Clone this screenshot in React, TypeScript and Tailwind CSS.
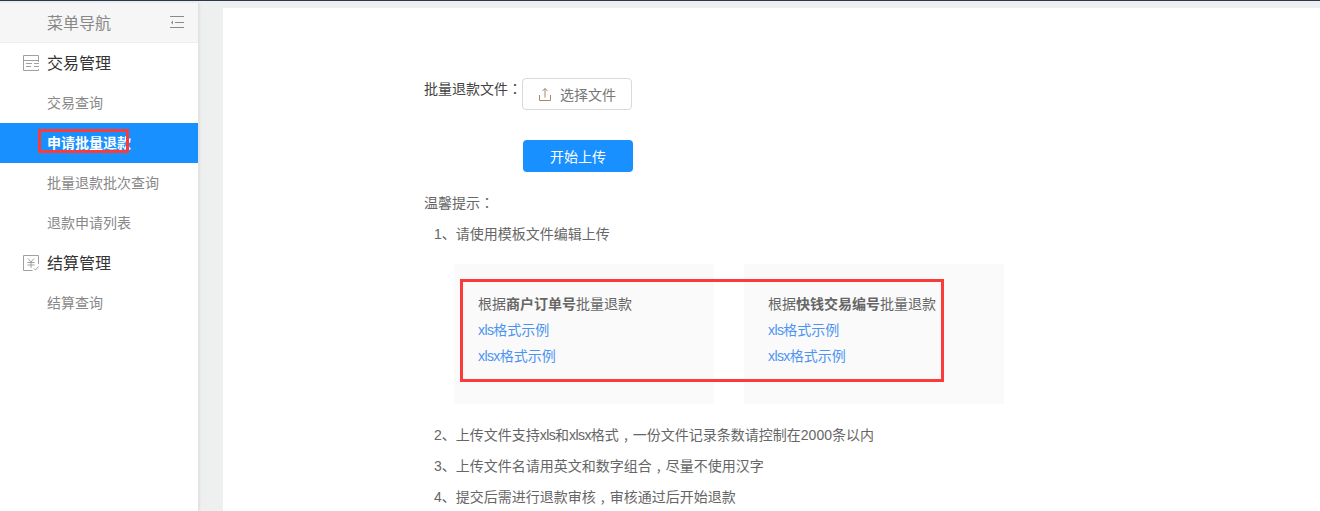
import { ReactNode } from 'react'

const FONT = 'font-["Noto_Sans_CJK_SC","Liberation_Sans",sans-serif]'

// latin letters run narrower in the original
function L({ children }: { children: ReactNode }) {
  return <span className='font-["Liberation_Sans",sans-serif] tracking-[-0.6px]'>{children}</span>
}

function N({ children }: { children: ReactNode }) {
  return <span className='font-["Liberation_Sans",sans-serif]'>{children}</span>
}

// full-width colon sits centred
function Colon() {
  return <span className='font-["Noto_Sans_CJK_TC",sans-serif]'>：</span>
}

// full-width comma sits low and in the middle of its cell
function Comma() {
  return <span className="inline-block w-3.5 text-center">,</span>
}

function TradeIcon() {
  return (
    <svg width="17" height="17" viewBox="0 0 17 17" fill="none" stroke="#a0a0a0" strokeWidth="1">
      <path d="M15.500 7V.5H.5v15h15v-1.500" />
      <path d="M.5 5.500h15M3 8.500h6M3 11.500h5M11 8.500h5M11 11.500h5" />
    </svg>
  )
}

function SettleIcon() {
  return (
    <svg width="17" height="17" viewBox="0 0 17 17" fill="none" stroke="#a0a0a0" strokeWidth="1">
      <path d="M15.500 9V.5H.5v15h9" />
      <path d="M5 3.500l3 3.500 3-3.500M4.500 7.500h7M4.500 10h7M8 7v6" />
      <path d="M11 13.500l1.500 1.500 3-3.500" />
    </svg>
  )
}

function SubItem({ children, active }: { children: ReactNode; active?: boolean }) {
  return (
    <div
      className={
        active
          ? 'h-10 pl-[47px] pb-0.5 flex items-center text-sm font-bold text-white bg-[#1890ff]'
          : 'h-10 pl-[47px] pb-0.5 flex items-center text-sm text-[#888888]'
      }
    >
      {children}
    </div>
  )
}

function GroupItem({ icon, children }: { icon: ReactNode; children: ReactNode }) {
  return (
    <div className="h-10 flex items-center text-base text-[#333333]">
      <span className="w-[47px] pl-[23px] flex items-center">{icon}</span>
      <span className="pb-0.5">{children}</span>
    </div>
  )
}

function SampleCard({ before, strong }: { before: string; strong: string }) {
  return (
    <div className="w-[260px] h-[140px] bg-[#fafafa] pl-6 pt-[27px]">
      <div className="h-[26px] leading-[24px] text-[#666666]">
        {before}
        <span className="font-bold">{strong}</span>
        批量退款
      </div>
      <div className="h-[26px] leading-[24px] text-[#4d94f0]">
        <L>xls</L>格式示例
      </div>
      <div className="h-[26px] leading-[24px] text-[#4d94f0]">
        <L>xlsx</L>格式示例
      </div>
    </div>
  )
}

export default function App() {
  return (
    <div className={`${FONT} relative w-[1320px] h-[511px] overflow-hidden bg-[#eef0f0] flex flex-col`}>
      <div className="h-[3px] shrink-0 border-t border-[#2d3650]" />

      <div className="flex flex-1 min-h-0">
        {/* Sidebar */}
        <aside className="w-[199px] shrink-0 bg-white border-r border-[#e2e2e2] shadow-[1px_0_2px_rgba(0,0,0,0.06)]">
          <div className="h-10 bg-[#f6f6f6] border-b border-[#eeeeee] flex items-center justify-between pl-[47px] pr-[14px] pb-0.5 text-base text-[#888888]">
            菜单导航
            <svg width="14" height="12" viewBox="0 0 14 12" fill="none" stroke="#8a8a8a" strokeWidth="1">
              <path d="M0 .5h14M5 6.500h9M0 11.500h14" />
              <path d="M3 4.500L1 6.500l2 2z" fill="#8a8a8a" stroke="none" />
            </svg>
          </div>
          <GroupItem icon={<TradeIcon />}>交易管理</GroupItem>
          <SubItem>交易查询</SubItem>
          <SubItem active>申请批量退款</SubItem>
          <SubItem>批量退款批次查询</SubItem>
          <SubItem>退款申请列表</SubItem>
          <GroupItem icon={<SettleIcon />}>结算管理</GroupItem>
          <SubItem>结算查询</SubItem>
        </aside>

        {/* Main card */}
        <main className="flex-1 ml-6 mt-[5px] bg-white pl-[201px] pt-[70px] text-sm text-[#666666]">
          <div className="flex items-start">
            <span className="w-[98px] h-[22px] leading-[20px] text-[#444444]">
              批量退款文件<Colon />
            </span>
            <button className="w-[110px] h-8 border border-[#d9d9d9] rounded flex items-center justify-center gap-2 text-[#777777]">
              <svg width="14" height="14" viewBox="0 0 14 14" fill="none" stroke="#a08a70" strokeWidth="1">
                <path d="M1.500 8v5.500h11V8M7 10.500V1.500M4.500 4L7 1.500 9.500 4" />
              </svg>
              选择文件
            </button>
          </div>

          <button className="ml-[99px] mt-[30px] w-[110px] h-8 rounded bg-[#1890ff] text-white block">开始上传</button>

          <div className="mt-[20px] h-[22px] leading-[20px]">
            温馨提示<Colon />
          </div>

          <div className="ml-2.5 mt-[9px] h-[22px] leading-[20px]">
            <N>1</N>、请使用模板文件编辑上传
          </div>

          <div className="ml-[30px] mt-[19px] flex gap-[30px]">
            <SampleCard before="根据" strong="商户订单号" />
            <SampleCard before="根据" strong="快钱交易编号" />
          </div>

          <div className="ml-2.5 mt-5 h-[22px] leading-[20px]">
            <N>2</N>、上传文件支持<L>xls</L>和<L>xlsx</L>格式<Comma />一份文件记录条数请控制在<N>2000</N>条以内
          </div>
          <div className="ml-2.5 mt-[9px] h-[22px] leading-[20px]">
            <N>3</N>、上传文件名请用英文和数字组合<Comma />尽量不使用汉字
          </div>
          <div className="ml-2.5 mt-[9px] h-[22px] leading-[20px]">
            <N>4</N>、提交后需进行退款审核<Comma />审核通过后开始退款
          </div>
        </main>
      </div>

      {/* Red annotation boxes on top of the screenshot */}
      <div className="absolute left-[38px] top-[129px] w-[91px] h-6 border-[3px] border-[#fb3a3a]" />
      <div className="absolute left-[460px] top-[279px] w-[484px] h-[103px] border-[3px] border-[#fb3a3a]" />
    </div>
  )
}
